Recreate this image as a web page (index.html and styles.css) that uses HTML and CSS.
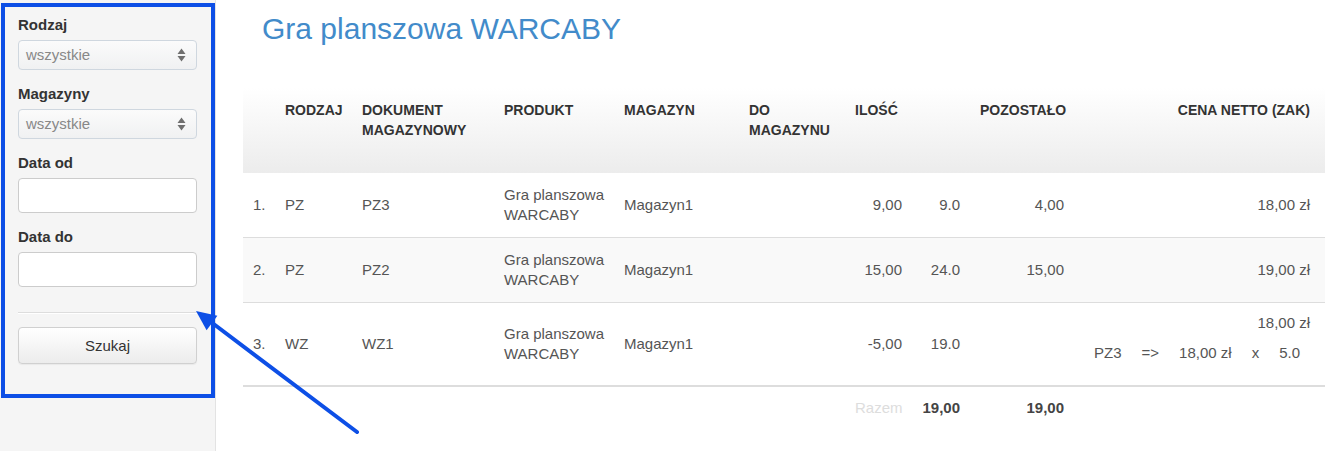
FILE: index.html
```html
<!DOCTYPE html>
<html lang="pl">
<head>
<meta charset="utf-8">
<title>Gra planszowa WARCABY</title>
<link rel="stylesheet" href="styles.css">
</head>
<body>
<div class="page">
  <aside class="sidebar">
    <div class="group">
      <div class="label">Rodzaj</div>
      <div class="select"><span>wszystkie</span><svg class="caret" width="9" height="16" viewBox="0 0 9 16"><path d="M0.5 7 L4.5 1.5 L8.5 7 Z M0.5 9 L4.5 14.5 L8.5 9 Z" fill="#6f6f6f"/></svg></div>
    </div>
    <div class="group">
      <div class="label">Magazyny</div>
      <div class="select"><span>wszystkie</span><svg class="caret" width="9" height="16" viewBox="0 0 9 16"><path d="M0.5 7 L4.5 1.5 L8.5 7 Z M0.5 9 L4.5 14.5 L8.5 9 Z" fill="#6f6f6f"/></svg></div>
    </div>
    <div class="group">
      <div class="label">Data od</div>
      <div class="input"></div>
    </div>
    <div class="group">
      <div class="label">Data do</div>
      <div class="input"></div>
    </div>
    <div class="divider"></div>
    <div class="button">Szukaj</div>
  </aside>
  <main class="main">
    <h1 class="title">Gra planszowa WARCABY</h1>
    <table class="grid">
      <colgroup>
        <col class="c1"><col class="c2"><col class="c3"><col class="c4"><col class="c5">
        <col class="c6"><col class="c7"><col class="c8"><col class="c9"><col class="c10">
      </colgroup>
      <thead>
        <tr>
          <th></th>
          <th>RODZAJ</th>
          <th>DOKUMENT MAGAZYNOWY</th>
          <th>PRODUKT</th>
          <th>MAGAZYN</th>
          <th>DO MAGAZYNU</th>
          <th>ILOŚĆ</th>
          <th></th>
          <th>POZOSTAŁO</th>
          <th class="r">CENA NETTO (ZAK)</th>
        </tr>
      </thead>
      <tbody>
        <tr>
          <td>1.</td><td>PZ</td><td>PZ3</td><td>Gra planszowa<br>WARCABY</td><td>Magazyn1</td><td></td>
          <td class="r">9,00</td><td class="r">9.0</td><td class="r">4,00</td><td class="r">18,00 zł</td>
        </tr>
        <tr class="alt">
          <td>2.</td><td>PZ</td><td>PZ2</td><td>Gra planszowa<br>WARCABY</td><td>Magazyn1</td><td></td>
          <td class="r">15,00</td><td class="r">24.0</td><td class="r">15,00</td><td class="r">19,00 zł</td>
        </tr>
        <tr>
          <td>3.</td><td>WZ</td><td>WZ1</td><td>Gra planszowa<br>WARCABY</td><td>Magazyn1</td><td></td>
          <td class="r">-5,00</td><td class="r">19.0</td><td></td>
          <td class="r">
            <div class="price">18,00 zł</div>
            <div class="breakdown"><span>PZ3</span><span>=&gt;</span><span>18,00 zł</span><span>x</span><span>5.0</span></div>
          </td>
        </tr>
      </tbody>
      <tfoot>
        <tr>
          <td></td><td></td><td></td><td></td><td></td><td></td>
          <td class="r muted">Razem</td><td class="r strong">19,00</td><td class="r strong">19,00</td><td></td>
        </tr>
      </tfoot>
    </table>
  </main>
</div>
<svg class="annotation" width="1325" height="451" viewBox="0 0 1325 451">
  <rect x="3" y="5" width="210" height="391" fill="none" stroke="#0d4fe6" stroke-width="4"/>
  <line x1="357" y1="432" x2="211" y2="322" stroke="#0d4fe6" stroke-width="4" stroke-linecap="round"/>
  <polygon points="196,311 206.6,330.2 217.4,315.8" fill="#0d4fe6"/>
</svg>
</body>
</html>
```
FILE: styles.css
```css
html, body {
  margin: 0;
  padding: 0;
  background: #fff;
}
body {
  font-family: "Liberation Sans", Arial, sans-serif;
  color: #555;
  width: 1325px;
  height: 451px;
  overflow: hidden;
  position: relative;
}
.page {
  display: flex;
  height: 451px;
}
.sidebar {
  width: 179px;
  flex: none;
  padding: 15px 18px 0 18px;
  background: #f5f5f5;
  border-right: 1px solid #e3e3e3;
}
.group {
  margin-bottom: 14px;
}
.label {
  font-size: 15px;
  font-weight: bold;
  line-height: 20px;
  color: #333;
  margin-bottom: 5px;
}
.select {
  box-sizing: border-box;
  height: 30px;
  border: 1px solid #cfd7df;
  border-radius: 4px;
  background: linear-gradient(#fbfbfb, #f0f1f2);
  display: flex;
  align-items: center;
  justify-content: space-between;
  padding: 0 10px 2px 7px;
  font-size: 15px;
  color: #888;
}
.caret {
  display: block;
  margin-top: 2px;
}
.input {
  box-sizing: border-box;
  height: 35px;
  border: 1px solid #cccccc;
  border-radius: 4px;
  background: #fff;
}
.divider {
  margin: 25px 0 13px;
  border-top: 1px solid #dddddd;
  border-bottom: 1px solid #fff;
}
.button {
  box-sizing: border-box;
  height: 37px;
  border: 1px solid #d0d0d0;
  border-radius: 4px;
  background: linear-gradient(#ffffff, #ececec);
  display: flex;
  align-items: center;
  justify-content: center;
  font-size: 15px;
  color: #333;
  box-shadow: 0 1px 1px rgba(0,0,0,0.05);
}
.main {
  flex: 1;
  padding: 12px 0 0 27px;
  min-width: 0;
}
.title {
  margin: 0 0 42px;
  padding-left: 19px;
  font-size: 30px;
  font-weight: normal;
  line-height: 34px;
  color: #428bca;
}
.grid {
  border-collapse: collapse;
  table-layout: fixed;
  width: 1082px;
  font-size: 15px;
}
.c1 { width: 32px; }
.c2 { width: 77px; }
.c3 { width: 142px; }
.c4 { width: 120px; }
.c5 { width: 125px; }
.c6 { width: 106px; }
.c7 { width: 67px; }
.c8 { width: 58px; }
.c9 { width: 104px; }
.c10 { width: 251px; }
.grid thead tr {
  background: linear-gradient(#ffffff, #ececec);
}
.grid th {
  text-align: left;
  vertical-align: top;
  font-size: 14px;
  font-weight: bold;
  line-height: 20px;
  color: #333;
  padding: 12px 10px 33px;
}
.grid th:last-child,
.grid td:last-child {
  padding-right: 15px;
}
.grid td {
  padding: 12px 10px;
  line-height: 20px;
  vertical-align: middle;
  color: #555;
  white-space: nowrap;
}
.grid tbody tr + tr td {
  border-top: 1px solid #dddddd;
}
.grid tbody tr.alt {
  background: #f9f9f9;
}
.grid tfoot td {
  border-top: 2px solid #dddddd;
  padding: 11px 10px;
}
.r {
  text-align: right;
}
.grid th.r {
  text-align: right;
}
.muted {
  color: #dddddd !important;
}
.strong {
  font-weight: bold;
  color: #444 !important;
}
.price {
  margin-top: -2px;
}
.breakdown {
  display: flex;
  justify-content: flex-end;
  margin: 10px 0 10px 0;
}
.breakdown span {
  padding: 0 10px;
}
.annotation {
  position: absolute;
  left: 0;
  top: 0;
  pointer-events: none;
}
```
